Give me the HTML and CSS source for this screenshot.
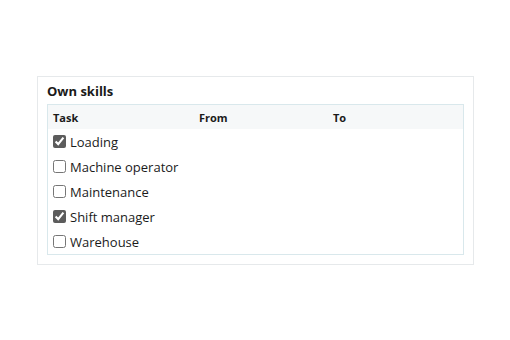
FILE: index.html
```html
<!DOCTYPE html>
<html lang="en">
<head>
    <meta charset="UTF-8">
    <title>Own skills</title>
    <link rel="stylesheet" href="styles.css">
</head>
<body>

<div class="skills-card">
    <h2 class="skills-header">Own skills</h2>
    <div class="skills-table">
        <div class="skills-row head">
            <div>Task</div>
            <div>From</div>
            <div>To</div>
        </div>
        <label class="skills-row"><span><input type="checkbox" checked> Loading</span></label>
        <label class="skills-row"><span><input type="checkbox"> Machine operator</span></label>
        <label class="skills-row"><span><input type="checkbox"> Maintenance</span></label>
        <label class="skills-row"><span><input type="checkbox" checked> Shift manager</span></label>
        <label class="skills-row"><span><input type="checkbox"> Warehouse</span></label>
    </div>
</div>

</body>
</html>
```

FILE: styles.css
```css
* {
    margin: 0;
    padding: 0;
    box-sizing: border-box;
}
body {
    font-family: 'Open Sans', 'Noto Sans', sans-serif;
    background-color: #ffffff;
    color: #1b1b1b;
    padding: 76px 37px 0 37px;
}
.skills-card {
    width: 437px;
    border: 1px solid #e6e9eb;
    padding: 6px 9px 9px 9px;
}
.skills-header {
    font-size: 13px;
    font-weight: 700;
    line-height: 16px;
    margin-bottom: 5px;
    color: #1a1a1a;
}
.skills-table {
    border: 1px solid #d9e8ec;
}
.skills-row {
    display: grid;
    grid-template-columns: 146px 134px 1fr;
    align-items: center;
    height: 25px;
    padding-left: 5px;
    font-size: 13px;
}
.skills-row.head {
    background-color: #f6f8f9;
    font-size: 11px;
    font-weight: 700;
    height: 24px;
}
.skills-row span {
    display: flex;
    align-items: center;
    white-space: nowrap;
}
.skills-row input {
    width: 13px;
    height: 13px;
    margin: 0 4px 0 0;
    accent-color: #5c5c5c;
}
```
